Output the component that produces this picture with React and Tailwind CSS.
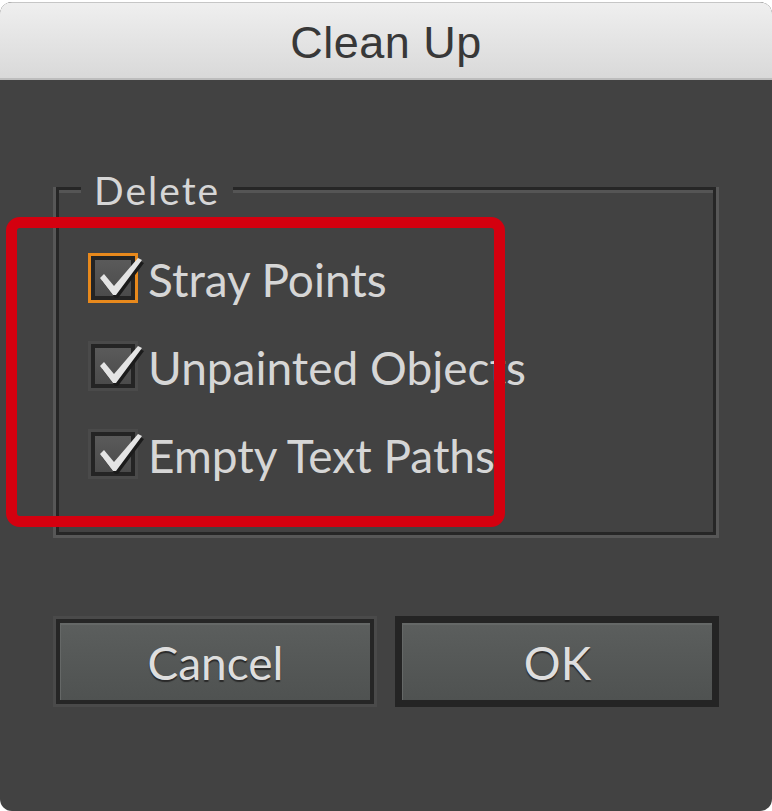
const LATO = { fontFamily: "Lato, 'Open Sans', sans-serif" };

function Check() {
  const d = "M9 22 L13 18 L23 30 L47 2 L51 4 L25 39 L22 39 Z";
  return (
    <svg
      className="absolute left-0 top-0 overflow-visible"
      width="50"
      height="50"
      viewBox="0 0 50 50"
    >
      <path d={d} fill="#1b1b1b" transform="translate(2 3)" />
      <path d={d} fill="#e4e4e4" />
    </svg>
  );
}

function Checkbox({ focused }) {
  return (
    <div
      className={
        "relative h-[50px] w-[50px] shrink-0 border-[3px] " +
        (focused ? "border-[#e8891c]" : "border-[#4a4a4a]")
      }
    >
      <div className="h-full w-full border-[4px] border-[#242424] bg-gradient-to-b from-[#5a5a5a] to-[#4b4b4b]" />
      <Check />
    </div>
  );
}

function Row({ label, focused }) {
  return (
    <div className="flex h-[88px] items-center gap-[10px]">
      <Checkbox focused={focused} />
      <span
        className="whitespace-nowrap pt-[3px] text-[46px] leading-none text-[#d6d6d6]"
        style={LATO}
      >
        {label}
      </span>
    </div>
  );
}

function Button({ children, primary }) {
  const inner = (
    <div className="flex h-full w-full items-center justify-center border-t-2 border-l border-[#656867] bg-gradient-to-b from-[#5b5e5d] to-[#4f5251]">
      <span
        className="text-[46px] leading-none text-[#dedede] [text-shadow:0_2px_1px_#2a2a2a]"
        style={LATO}
      >
        {children}
      </span>
    </div>
  );
  if (primary) {
    return (
      <div className="h-[91px] w-[324px] border-[7px] border-[#242424]">{inner}</div>
    );
  }
  return (
    <div className="h-[91px] w-[324px] border-[3px] border-[#4a4a4a]">
      <div className="h-full w-full border-[4px] border-[#262626]">{inner}</div>
    </div>
  );
}

export default function App() {
  return (
    <div className="h-[811px] w-[772px] bg-white pt-[2px]">
      <div className="relative flex h-[809px] flex-col overflow-hidden rounded-[12px] bg-[#424242]">
        <div className="flex h-[78px] shrink-0 items-center justify-center border-t border-b-2 border-t-[#c6c6c6] border-b-[#bdbdbd] bg-gradient-to-b from-[#efefef] to-[#d9d9d9] pt-[4px]">
          <span
            className="text-[45px] leading-none tracking-[0.5px] text-[#383838]"
            style={{ fontFamily: "'Liberation Sans', Arial, sans-serif" }}
          >
            Clean Up
          </span>
        </div>

        <div className="px-[53px] pt-[107px]">
          <div className="relative border-x-[3px] border-b-[3px] border-[#575757]">
            <div className="border-[3px] border-[#262626] pl-[29px] pt-[44px] pb-[34px] shadow-[inset_0_3px_0_#555555]">
              <Row label="Stray Points" focused />
              <Row label="Unpainted Objects" />
              <Row label="Empty Text Paths" />
            </div>
            <div
              className="absolute left-[25px] top-[-19px] flex h-[44px] items-center bg-[#424242] px-[13px] text-[39px] leading-none tracking-[2px] text-[#d6d6d6]"
              style={LATO}
            >
              Delete
            </div>
          </div>
        </div>

        <div className="mt-[78px] flex gap-[18px] px-[53px]">
          <Button>Cancel</Button>
          <Button primary>OK</Button>
        </div>

        <div className="pointer-events-none absolute left-[6px] top-[215px] h-[310px] w-[499px] rounded-[14px] border-[11px] border-[#d4000f]" />
      </div>
    </div>
  );
}
